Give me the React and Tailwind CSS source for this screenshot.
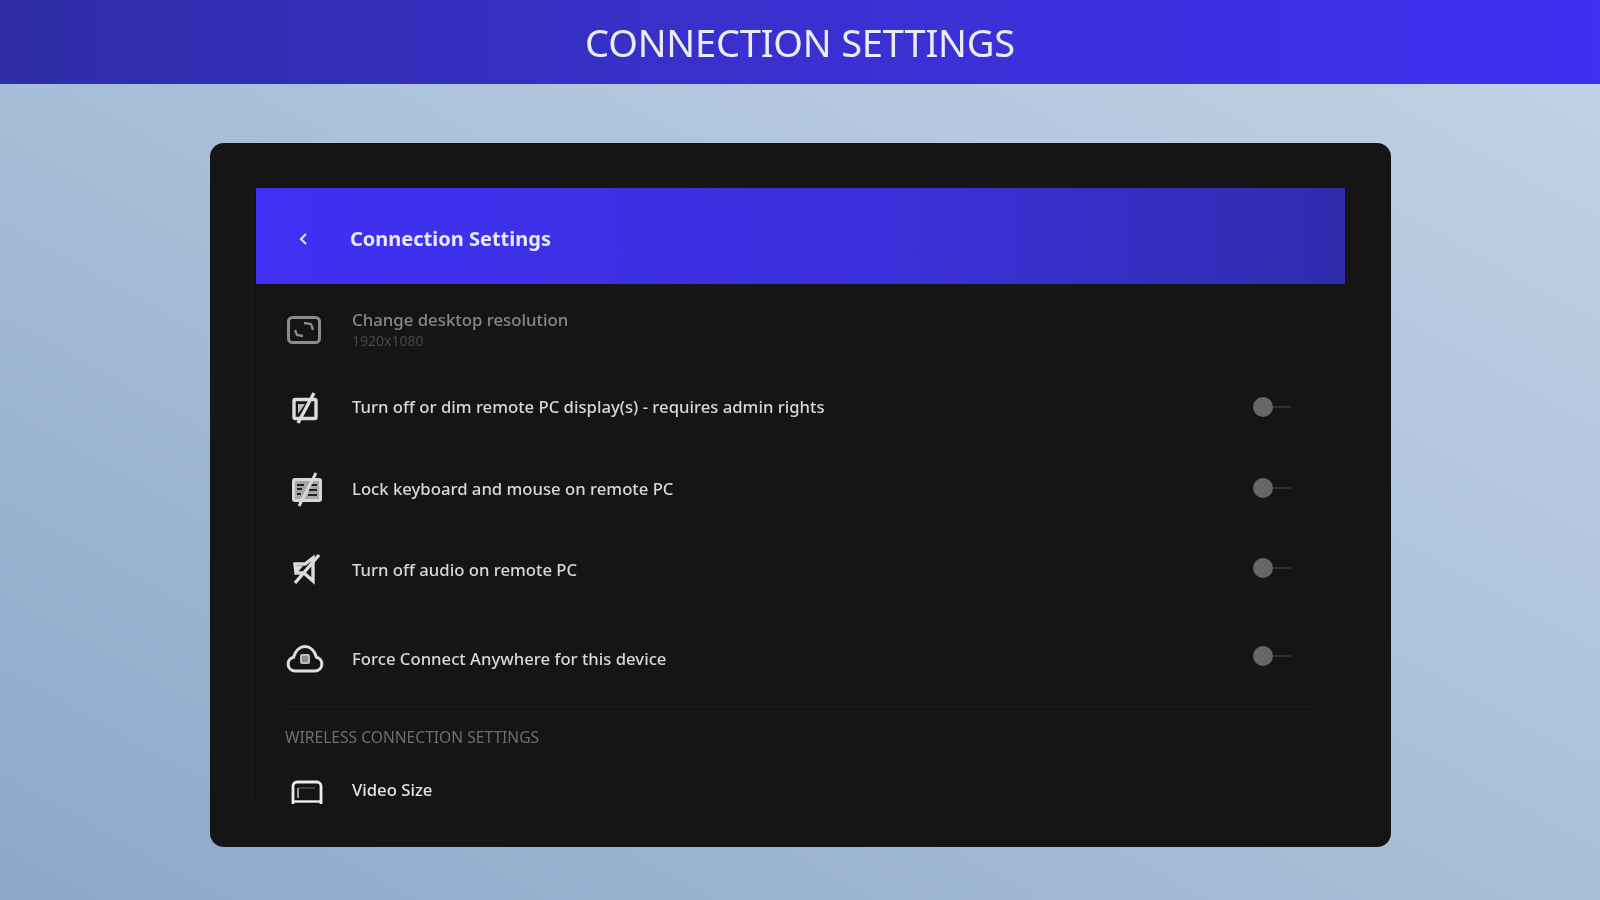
import React from "react";

// icons are hand drawn, the reference is a blurry upscale of android material icons
const ResolutionIcon = () => (
  <svg width="36" height="30" viewBox="0 0 36 30" fill="none" stroke="#8c8c8c" strokeWidth="3">
    <rect x="2.500" y="2.500" width="31" height="25" rx="4" />
    <path d="M9 15l2 5 6 1" strokeWidth="2.400" />
    <path d="M27 15l-2-6-7-1" strokeWidth="2.400" />
  </svg>
);

const DisplayOffIcon = () => (
  <svg width="36" height="34" viewBox="0 0 36 34" fill="none" stroke="#dcdcdc" strokeWidth="3.400">
    <rect x="8" y="9.500" width="22" height="19" rx="1.500" />
    <path d="M28 3 12 33" />
    <path d="M12 14h7l-7 10z" fill="#bdbdbd" stroke="none" />
  </svg>
);

const KeyboardOffIcon = () => (
  <svg width="38" height="36" viewBox="0 0 38 36" fill="none" stroke="#d8d8d8" strokeWidth="3">
    <rect x="7.500" y="8.500" width="27" height="21" rx="1.500" fill="#a6a6a6" />
    <path d="M11 14h7M11 18h5M11 23h4M24 14h7M23 19h8M22 24h9" strokeWidth="2.200" stroke="#222222" />
    <path d="M30 2 13 35" strokeWidth="3" />
  </svg>
);

const AudioOffIcon = () => (
  <svg width="36" height="34" viewBox="0 0 36 34" fill="none" stroke="#dcdcdc" strokeWidth="3.400">
    <path d="M9 11h10l8-6v23l-9-8H10z" />
    <path d="M33 2 9 30" />
    <path d="M11 13h6l-5 6h-1z" fill="#dcdcdc" stroke="none" />
  </svg>
);

const CloudIcon = () => (
  <svg width="38" height="30" viewBox="0 0 38 30" fill="none" stroke="#dedede" strokeWidth="3">
    <path d="M9 27a7 7 0 0 1-1.500-13.800C9.500 6.500 14 2.500 19 2.500s9.500 4 11.500 10.700A7 7 0 0 1 29 27z" />
    <rect x="15" y="11" width="8" height="8" rx="1" fill="#8a8a8a" strokeWidth="2" stroke="#bdbdbd" />
  </svg>
);

const VideoSizeIcon = () => (
  <svg width="34" height="25" viewBox="0 0 34 25" fill="none" stroke="#ececec" strokeWidth="2.800">
    <path d="M3 24V6a4 4 0 0 1 4-4h20a4 4 0 0 1 4 4v18" />
    <path d="M3 21.500h28" strokeWidth="2.400" />
    <path d="M9 8h16" strokeWidth="1.400" stroke="#555555" />
    <path d="M8 8v10" strokeWidth="1.600" stroke="#bdbdbd" />
  </svg>
);

const Toggle = ({ shift }) => (
  <div className={`flex items-center ${shift}`}>
    <div className="w-5 h-5 rounded-full bg-[#666666]" />
    <div className="w-[18px] h-[2px] bg-[#303030]" />
  </div>
);

const rows = [
  { icon: <DisplayOffIcon />, text: "Turn off or dim remote PC display(s) - requires admin rights", box: "mt-[5px]", shift: "mb-0" },
  { icon: <KeyboardOffIcon />, text: "Lock keyboard and mouse on remote PC", box: "mt-[10px]", shift: "mb-[2px]" },
  { icon: <AudioOffIcon />, text: "Turn off audio on remote PC", box: "mt-[9px]", shift: "mb-[4px]" },
  { icon: <CloudIcon />, text: "Force Connect Anywhere for this device", box: "mt-[17px]", shift: "mb-[6px]" },
];

export default function App() {
  return (
    <div className="w-[1600px] h-[900px] overflow-hidden flex flex-col bg-gradient-to-tr from-[#8ca8c9] via-[#a9bfd9] to-[#c3d2e6] font-['Noto_Sans',sans-serif]">
      <div className="h-[84px] shrink-0 flex items-center justify-center bg-gradient-to-r from-[#2e2da6] via-[#3a30d0] to-[#3f30f2]">
        <h1 className="text-[38px] leading-none text-[#ececf8] tracking-[-0.2px] blur-[0.5px]">CONNECTION SETTINGS</h1>
      </div>

      <div className="ml-[210px] mt-[59px] w-[1181px] h-[704px] rounded-[14px] bg-[#151515] p-[45px] pb-0 blur-[0.6px]">
        <div className="h-[617px] border-x border-b border-[#101010] flex flex-col overflow-hidden">
          <div className="h-[96px] shrink-0 flex items-center pt-[5px] bg-gradient-to-r from-[#4030f4] via-[#3a30d8] via-60% to-[#2f2cad]">
            <svg className="ml-[42px]" width="10" height="14" viewBox="0 0 10 14" fill="none" stroke="#dcdcf8" strokeWidth="2.200">
              <path d="M8 2 3 7l5 5" />
            </svg>
            <span className="ml-[42px] text-[20px] font-bold text-[#e8e8fa]">Connection Settings</span>
          </div>

          <div className="mt-[10px] h-[72px] shrink-0 flex items-center pl-[30px]">
            <div className="w-[66px] shrink-0 flex">
              <ResolutionIcon />
            </div>
            <div className="flex flex-col">
              <span className="text-[16.800px] leading-[21px] font-medium text-[#878787]">Change desktop resolution</span>
              <span className="text-[14px] leading-[21px] text-[#474747]">1920x1080</span>
            </div>
          </div>

          {rows.map((r) => (
            <div key={r.text} className={`${r.box} h-[72px] shrink-0 flex items-center pl-[30px] pr-[54px]`}>
              <div className="w-[66px] shrink-0 flex">{r.icon}</div>
              <span className="flex-1 text-[16.700px] font-medium text-[#d8d8d8]">{r.text}</span>
              <Toggle shift={r.shift} />
            </div>
          ))}

          <div className="mt-[11px] mx-[28px] h-px shrink-0 bg-[#1d1d1d]" />
          <div className="mt-[21px] pl-[29px] text-[15.600px] leading-[18px] text-[#6e6e6e]">WIRELESS CONNECTION SETTINGS</div>

          <div className="mt-[33px] flex items-start pl-[34px]">
            <div className="w-[62px] shrink-0 flex pt-[1px]">
              <VideoSizeIcon />
            </div>
            <span className="text-[16.700px] leading-[22px] font-medium text-[#e4e4e4]">Video Size</span>
          </div>
        </div>
      </div>
    </div>
  );
}
